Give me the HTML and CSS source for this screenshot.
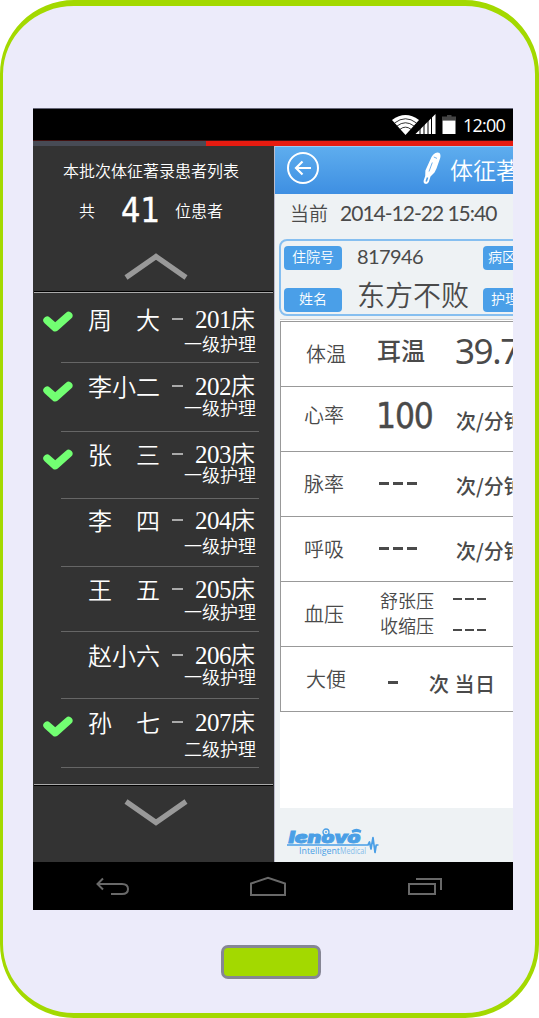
FILE: index.html
```html
<!DOCTYPE html>
<html lang="zh-CN">
<head>
<meta charset="utf-8">
<title>体征著录</title>
<link rel="stylesheet" href="styles.css">
</head>
<body>
<svg width="0" height="0" class="defs">
  <symbol id="check" viewBox="0 0 30 22"><path d="M4.2 9.3 L12.2 16.5 L25.6 4.6" fill="none" stroke="#72ff72" stroke-width="7.8" stroke-linecap="round" stroke-linejoin="round"/></symbol>
</svg>
<div class="phone">
  <div class="screen">
    <div class="status">
      <svg width="66" height="22" viewBox="0 0 66 22">
        <path d="M0 6 Q13.5 -4 27 6 L13.5 21 Z" fill="#fff"/>
        <path d="M2.5 9 Q13.5 0.5 24.5 9 M5 12 Q13.5 5.5 22 12 M8 15.3 Q13.5 11 19 15.3" fill="none" stroke="#000" stroke-width=".8"/>
        <path d="M23.5 20 L43.5 0 V20 Z" fill="#fff"/>
        <path d="M28 12v8 M32 9v11 M36 5v15 M39.5 2v18" stroke="#000" stroke-width="1"/>
        <path d="M50 2.5 H55 V1 H59.5 V2.5 H64 V6.5 H50 Z" fill="#444"/>
        <path d="M50.5 6.5 H63.5 V20 H50.5 Z" fill="#fff"/>
      </svg>
      <span class="clock">12:00</span>
    </div>
    <div class="strip"><i></i></div>
    <div class="content">
      <aside class="side">
        <header class="side-head">
          <div class="side-title">本批次体征著录患者列表</div>
          <div class="count"><span>共</span><b>41</b><span>位患者</span></div>
          <svg class="up" width="64" height="30" viewBox="0 0 64 30"><path d="M2 25.5 L32 4.5 L62 25.5" fill="none" stroke="#999" stroke-width="5.2"/></svg>
        </header>
        <ul class="list">
          <li><svg class="tick"><use href="#check"/></svg><div class="info"><div class="who"><span class="name">周　大</span><i></i><span class="bed"><b>201</b>床</span></div><div class="level">一级护理</div></div></li>
          <li><svg class="tick"><use href="#check"/></svg><div class="info"><div class="who"><span class="name">李小二</span><i></i><span class="bed"><b>202</b>床</span></div><div class="level">一级护理</div></div></li>
          <li><svg class="tick"><use href="#check"/></svg><div class="info"><div class="who"><span class="name">张　三</span><i></i><span class="bed"><b>203</b>床</span></div><div class="level">一级护理</div></div></li>
          <li><div class="info"><div class="who"><span class="name">李　四</span><i></i><span class="bed"><b>204</b>床</span></div><div class="level">一级护理</div></div></li>
          <li><div class="info"><div class="who"><span class="name">王　五</span><i></i><span class="bed"><b>205</b>床</span></div><div class="level">一级护理</div></div></li>
          <li><div class="info"><div class="who"><span class="name">赵小六</span><i></i><span class="bed"><b>206</b>床</span></div><div class="level">一级护理</div></div></li>
          <li><svg class="tick"><use href="#check"/></svg><div class="info"><div class="who"><span class="name">孙　七</span><i></i><span class="bed"><b>207</b>床</span></div><div class="level">二级护理</div></div></li>
        </ul>
        <footer class="side-foot">
          <svg width="64" height="30" viewBox="0 0 64 30"><path d="M2 3.5 L32 24.5 L62 3.5" fill="none" stroke="#999" stroke-width="5.2"/></svg>
        </footer>
      </aside>
      <main class="main">
        <header class="bar">
          <svg width="34" height="34" viewBox="0 0 34 34" fill="none" stroke="#fff"><circle cx="17" cy="16" r="15" stroke-width="2"/><path d="M25 16 H10.5 M16.5 9.5 L10 16 L16.5 22.5" stroke-width="2.2"/></svg>
          <svg class="thermo" width="18" height="33" viewBox="0 0 18 33"><path d="M12 1.3 Q14.5 -.3 16.5 1 Q18 2.5 17.2 6 L13.5 16.5 L11.5 20.5 L7.5 24.5 L5.8 30 Q4 33 1.5 31.6 Q0 30.5 1 27.5 L2.2 24 L2.4 18.5 L8.5 5 Q10 2.3 12 1.3 Z" fill="#fff"/><path d="M10.8 5 L14 6.4 M9.3 10.5 L6 19.5" stroke="#4b9ce7" stroke-width=".8"/><path d="M4.6 25.5 L3.2 29.6" stroke="#4b9ce7" stroke-width="1.5"/></svg>
          <h1>体征著录</h1>
        </header>
        <div class="date"><span>当前</span><b>2014-12-22 15:40</b></div>
        <section class="patient">
          <div class="line"><span class="tag">住院号</span><b class="id">817946</b><span class="tag right">病区</span></div>
          <div class="line two"><span class="tag">姓名</span><span class="pname">东方不败</span><span class="tag right">护理</span></div>
        </section>
        <section class="sheet">
          <div class="row r1"><span class="label">体温</span><span class="kind">耳温</span><b class="num">39.7</b></div>
          <div class="row r2"><span class="label">心率</span><b class="num">100</b><span class="unit">次/分钟</span></div>
          <div class="row r3"><span class="label">脉率</span><span class="dashes"><i></i><i></i><i></i></span><span class="unit">次/分钟</span></div>
          <div class="row r4"><span class="label">呼吸</span><span class="dashes"><i></i><i></i><i></i></span><span class="unit">次/分钟</span></div>
          <div class="row r5"><span class="label">血压</span><div class="bp"><div>舒张压<span class="dashes small"><i></i><i></i><i></i></span></div><div>收缩压<span class="dashes small"><i></i><i></i><i></i></span></div></div></div>
          <div class="row r6"><span class="label">大便</span><span class="dashes"><i></i></span><span class="unit">次 当日</span></div>
        </section>
        <footer class="brand">
          <svg width="94" height="32" viewBox="0 0 94 32">
            <g fill="#4a9fe6">
              <text class="lenovo" x="1.5" y="14.5" textLength="72" lengthAdjust="spacingAndGlyphs">lenovo</text>
              <text class="im" x="12" y="26" textLength="41" lengthAdjust="spacingAndGlyphs">Intelligent</text>
              <text class="im pale" x="53" y="26" textLength="26" lengthAdjust="spacingAndGlyphs">Medical</text>
              <path d="M65.500 5 L64.500 2.500 Q69.500 -1 74.500 2.500 L73.500 5 Q69.500 3 65.500 5 Z"/>
            </g>
            <g fill="none" stroke="#4a9fe6">
              <path d="M0 17 H81 L82.500 14 L84 21 L86 9.500 L88 24.500 L89.200 17 H91.500" stroke-width="1.700" stroke-linejoin="round"/>
              <circle cx="39" cy="4" r="3" fill="#eef2f4" stroke-width="1.300"/><circle cx="39" cy="4" r=".6"/>
            </g>
          </svg>
        </footer>
      </main>
    </div>
    <nav class="nav">
      <svg width="480" height="48" viewBox="0 0 480 48" fill="none" stroke="#696969" stroke-width="2">
        <path d="M64 22 H89 Q95 22 95 27 Q95 32 89 32 H78"/>
        <path d="M70 16.500 L64.500 22 L70 27.500"/>
        <path d="M218 33 V21.500 L235 15.800 L252 21.500 V33 Z"/>
        <path d="M376 22 H402 V32 H376 Z M383 17 H408 V28"/>
      </svg>
    </nav>
  </div>
  <div class="home"></div>
</div>
</body>
</html>
```

FILE: styles.css
```css
* { box-sizing: border-box; margin: 0; padding: 0; }
body { width: 539px; height: 1018px; overflow: hidden; background: #fff; font-family: "Noto Sans CJK SC", sans-serif; font-weight: 350; color: #4a4a4a; }
b { font-weight: 400; font-family: "Open Sans", sans-serif; }
svg { display: block; flex: none; }
span, b, h1 { white-space: nowrap; flex: none; }
.defs { position: absolute; }
.phone { width: 539px; height: 1018px; background: #ecebfa; border: solid #a3d900; border-width: 6px 4px 5px 3px; border-radius: 74px; padding: 102px 22px 0 30px; }
.screen { width: 480px; height: 802px; overflow: hidden; background: #000; }

.status { height: 32px; display: flex; align-items: center; padding-left: 359px; border-top: 1px solid #667; }
.clock { font: 500 18px/32px "Open Sans", sans-serif; letter-spacing: -.8px; color: #fff; margin-left: 5px; }
.strip { height: 6px; background: #e71b10; border-top: 1px solid #401010; }
.strip i { display: block; width: 173px; height: 5px; background: #474b55; }
.content { display: flex; height: 716px; }

.side { width: 241px; flex: none; background: #333; color: #fff; }
.side-head { height: 146px; overflow: hidden; }
.side-title { font-size: 16px; line-height: 24px; margin: 12px 0 0 30px; }
.count { display: flex; align-items: center; height: 40px; margin: 8px 0 0 46px; font-size: 16px; line-height: 24px; }
.count b { font: 400 34px/40px "DejaVu Sans Condensed", "DejaVu Sans", sans-serif; -webkit-text-stroke: .4px #fff; width: 54px; margin-left: 26px; }
.up { margin: 22px 0 0 91px; }
.list { list-style: none; height: 493px; border: solid #aaa; border-width: 1px 0; margin: 0 1px; box-shadow: 0 -1px #000, 0 1px #000; padding: 1px 0 0; }
.list li { display: flex; height: 69px; padding-left: 9px; }
.tick { width: 30px; height: 22px; margin: 17px 0 0; }
.info { width: 198px; margin-left: 18px; border-bottom: 1px solid #666; padding: 12px 0 0 27px; }
.tick + .info { margin-left: -12px; }
.who { display: flex; align-items: center; height: 26px; font-size: 24px; line-height: 26px; }
.who i { width: 11px; height: 2px; background: #aaa; margin: 0 12px; }
.bed b { font: 400 25px/26px "Liberation Serif", serif; letter-spacing: -.5px; }
.level { font-size: 18px; line-height: 20px; margin: 1px 0 0 96px; }
.list li:nth-child(2) .info, .list li:nth-child(6) .info, .list li:nth-child(7) .info { padding-top: 10px; }
.list li:nth-child(3) .info, .list li:nth-child(5) .info { padding-top: 9px; }
.list li:nth-child(4) .info { padding-top: 8px; }
.list li:nth-child(2) .level, .list li:nth-child(6) .level { margin-top: -2px; }
.list li:nth-child(3) .level { margin-top: -3px; }
.list li:nth-child(4) .level { margin-top: 2px; }
.list li:nth-child(5) .level { margin-top: -1px; }
.list li:nth-child(7) .level { margin-top: 3px; }
.list li:nth-child(2) .tick { margin-top: 18px; }
.list li:nth-child(3) { height: 67px; }
.list li:nth-child(4) { height: 68px; }
.list li:nth-child(5) { height: 65px; }
.list li:nth-child(6) { height: 67px; }
.side-foot { padding: 13px 0 0 91px; }

.main { width: 239px; overflow: hidden; background: #eef2f4; border-left: 1px solid #bbc; }
.bar { height: 48px; display: flex; background: linear-gradient(#5eadee, #3e8fe2); padding: 5px 0 0 11px; border-top: 1px solid #9cccf3; color: #fff; }
.thermo { margin-left: 103px; }
.bar h1 { font-size: 23px; font-weight: 350; line-height: 34px; margin-left: 9px; }
.date { display: flex; height: 45px; line-height: 38px; font-size: 19px; padding-left: 15px; }
.date b { font-family: Lato, sans-serif; font-size: 21px; letter-spacing: -1px; margin-left: 12px; }
.patient { margin-left: 4px; width: 260px; height: 77px; border: 2px solid #86bff0; border-radius: 8px; padding: 5px 0 0 3px; }
.line { display: flex; height: 24px; }
.tag { width: 58px; height: 24px; background: #4a9fe8; color: #fff; border-radius: 4px; font-size: 14px; line-height: 21px; text-align: center; }
.tag.right { width: 80px; text-align: left; padding-left: 5px; }
.id { font: 400 20px/20px Lato, sans-serif; letter-spacing: -.6px; width: 126px; margin-left: 15px; }
.two { margin-top: 18px; }
.two .tag.right { padding-left: 8px; }
.pname { font-size: 28px; line-height: 12px; width: 126px; margin-left: 15px; }
.sheet { background: #fff; margin: 3px 0 0 5px; width: 260px; height: 489px; border-top: 1px solid #ccc; padding-top: 1px; }
.row { display: flex; height: 65px; border: solid #999; border-width: 1px 0 0 1px; padding-left: 25px; }
.row.r6 { height: 66px; border-bottom-width: 1px; }
.label { font-size: 20px; line-height: 30px; width: 71px; margin-top: 17px; }
.kind { font-size: 24px; font-weight: 500; line-height: 30px; width: 78px; margin-top: 13px; }
.num { font: 400 35px/40px "Noto Sans", sans-serif; letter-spacing: -1.400px; margin-top: 9px; }
.unit { font-size: 20px; font-weight: 500; line-height: 30px; margin-top: 19px; }
.r2 .label, .r3 .label, .r4 .label, .r5 .label { margin-left: -2px; width: 73px; }
.r2 .label { margin-top: 13px; }
.r2 .num { font: 400 35px/40px "DejaVu Sans Condensed", "DejaVu Sans", sans-serif; -webkit-text-stroke: .4px #4a4a4a; letter-spacing: -1.100px; width: 78px; margin: 9px 0 0 -1px; }
.r2 .unit { margin-left: 2px; }
.dashes { display: flex; gap: 4px; width: 77px; margin: 30px 0 0 2px; }
.dashes i { width: 10px; height: 3px; background: #4a4a4a; }
.bp { font-size: 18px; line-height: 25px; margin: 6px 0 0 3px; }
.bp div { display: flex; }
.dashes.small { gap: 3px; margin: 10px 0 0 19px; }
.bp div + div .small { margin-top: 16px; }
.dashes.small i { width: 9px; height: 2px; }
.r6 .dashes { width: 41px; margin: 34px 0 0 11px; }
.r6 .unit { margin-top: 22px; letter-spacing: .500px; }
.brand { padding: 20px 0 0 12px; }
.lenovo { font: italic 900 16px Inter, sans-serif; stroke: #4a9fe6; stroke-width: .800px; }
.im { font: 400 9px "Open Sans", sans-serif; }
.pale { opacity: .65; }

.nav { height: 48px; }
.home { width: 100px; height: 34px; margin: 35px 0 0 188px; border: 3px solid #868694; border-radius: 7px; background: #a3d900; }
```
